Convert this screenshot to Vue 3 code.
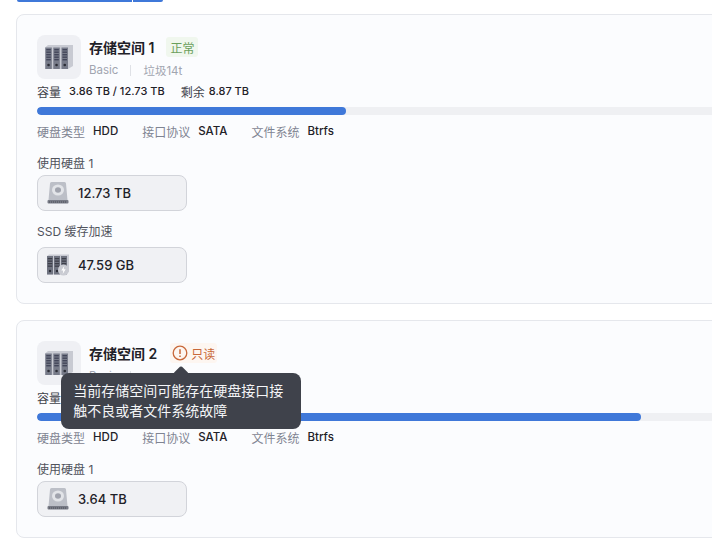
<template>
  <div class="page">
    <div class="top-btn"><span class="top-main"></span><span class="top-arrow"></span></div>

    <div v-for="pool in pools" :key="pool.name" class="card">
      <div class="head">
        <div class="pool-icon">
          <svg width="28" height="26" viewBox="0 0 28 26">
            <path d="M0 3.500l3 -2.500h25v21l-5 3h-23z" fill="#c8cad2" />
            <g v-for="x in [0.300, 8.300, 16.500]" :key="x">
              <rect :x="x" y="3.500" width="6.500" height="21.500" fill="#777b89" />
              <rect v-for="y in [5, 7.500, 10, 12.500, 15]" :key="y" :x="x + 1" :y="y" width="4.500" height="1.400" fill="#43465a" />
              <circle :cx="x + 3.250" cy="21" r="1.300" fill="#2b2d36" />
            </g>
          </svg>
        </div>
        <div class="head-text">
          <div class="title-row">
            <span class="title">{{ pool.name }}</span>
            <span v-if="pool.status === 'ok'" class="tag tag-ok">正常</span>
            <span v-else class="tag tag-warn">
              <svg width="16" height="16" viewBox="0 0 16 16" fill="none" stroke="#c8683a" stroke-width="1.300">
                <circle cx="8" cy="8" r="6.800" />
                <path d="M8 4.200v4.800M8 10.600v1.300" stroke-width="1.500" />
              </svg>
              只读
              <div class="tooltip">当前存储空间可能存在硬盘接口接触不良或者文件系统故障</div>
            </span>
          </div>
          <div class="sub-row">
            <span>Basic</span>
            <i class="sep"></i>
            <span>{{ pool.remark }}</span>
          </div>
        </div>
      </div>

      <div class="capacity">
        <span class="cap-label">容量</span>
        <b>{{ pool.used }} / {{ pool.total }}</b>
        <span class="cap-label cap-left">剩余</span>
        <b>{{ pool.free }}</b>
      </div>

      <div class="track">
        <div class="fill" :style="{ width: pool.percent + 'px' }"></div>
      </div>

      <div class="specs">
        <span class="spec"><em>硬盘类型</em><b>HDD</b></span>
        <span class="spec"><em>接口协议</em><b>SATA</b></span>
        <span class="spec"><em>文件系统</em><b>Btrfs</b></span>
      </div>

      <div class="disk-label">使用硬盘 1</div>
      <div class="chip">
        <svg width="22" height="22" viewBox="0 0 22 22">
          <path d="M3 1.500a1.500 1.500 0 0 1 1.500 -1.500h13a1.500 1.500 0 0 1 1.500 1.500l1.500 16.500h-19z" fill="#bcbfc7" />
          <ellipse cx="11" cy="8" rx="6" ry="5.600" fill="#e2e4e8" />
          <ellipse cx="11" cy="8" rx="3" ry="2.700" fill="#a0a3ad" />
          <rect x="0.500" y="18" width="21" height="3.500" rx="1" fill="#777a85" />
          <path d="M2 20h18" stroke="#4c4e57" stroke-width="1" stroke-dasharray="1 1" />
        </svg>
        <span>{{ pool.disk }}</span>
      </div>

      <template v-if="pool.ssd">
        <div class="disk-label ssd-label">SSD 缓存加速</div>
        <div class="chip">
          <svg width="22" height="22" viewBox="0 0 22 22">
            <path d="M0 2l2 -1.500h20v17l-4 3h-18z" fill="#c8cad2" />
            <g v-for="x in [0, 7, 14]" :key="x">
              <rect :x="x" y="2" width="6" height="18.500" fill="#6f7380" />
              <rect v-for="y in [4, 6.500, 9, 11.500]" :key="y" :x="x + 0.800" :y="y" width="4.400" height="1.300" fill="#3d3f49" />
              <circle :cx="x + 3" cy="17" r="1.200" fill="#2b2d36" />
            </g>
            <circle cx="16.500" cy="16" r="5.500" fill="#c9cbd2" />
            <path d="M17.300 12l-3 4.500h2l-.6 3.500 3 -4.700h-2z" fill="#fff" />
          </svg>
          <span>{{ pool.ssd }}</span>
        </div>
      </template>
    </div>
  </div>
</template>

<script setup>
const pools = [
  {
    name: "存储空间 1",
    status: "ok",
    remark: "垃圾14t",
    used: "3.86 TB",
    total: "12.73 TB",
    free: "8.87 TB",
    percent: 309,
    disk: "12.73 TB",
    ssd: "47.59 GB"
  },
  {
    name: "存储空间 2",
    status: "readonly",
    remark: "",
    used: "3.12 TB",
    total: "3.64 TB",
    free: "0.52 TB",
    percent: 604,
    disk: "3.64 TB"
  }
];
</script>

<style>
html,
body {
  overflow: hidden;
  background: #fff;
}
</style>

<style scoped>
.page {
  width: 712px;
  height: 560px;
  overflow: hidden;
  padding-left: 16px;
  box-sizing: border-box;
  font-family: Inter, "Noto Sans CJK SC", sans-serif;
  font-size: 12px;
  color: #1f2128;
}
.top-btn {
  display: flex;
  gap: 1px;
  height: 2px;
  margin-left: 1px;
  margin-bottom: 12px;
}
.top-main {
  width: 115px;
  background: #3f78d9;
  border-radius: 0 0 0 5px;
}
.top-arrow {
  width: 30px;
  background: #3f78d9;
  border-radius: 0 0 5px 0;
}
.card {
  width: 1060px;
  box-sizing: border-box;
  padding: 20px;
  margin-bottom: 16px;
  background: #fbfcfe;
  border: 1px solid #e5e7ec;
  border-radius: 8px;
}
.head {
  display: flex;
  gap: 8px;
  height: 44px;
}
.pool-icon {
  width: 44px;
  height: 44px;
  border-radius: 8px;
  background: #eff0f4;
  display: flex;
  align-items: center;
  justify-content: center;
}
.title-row {
  display: flex;
  align-items: center;
  gap: 12px;
  height: 24px;
}
.title {
  font-size: 14px;
  font-weight: 600;
  color: #1f2128;
}
.tag {
  position: relative;
  display: flex;
  align-items: center;
  height: 20px;
  padding: 0 4px;
  border-radius: 3px;
  font-size: 12px;
}
.tag-ok {
  background: #f0f7ee;
  color: #6a9f5c;
}
.tag-warn {
  gap: 3px;
  padding: 0 2px;
  margin-left: 1px;
  background: #fdf6f1;
  color: #c8683a;
}
.tooltip {
  position: absolute;
  left: -109px;
  top: 30px;
  width: 240px;
  box-sizing: border-box;
  padding: 8px 12px;
  background: #3f424b;
  border-radius: 8px;
  color: #f4f5f7;
  font-size: 14px;
  line-height: 20px;
  z-index: 2;
}
.tooltip::before {
  content: "";
  position: absolute;
  left: 114px;
  top: -5px;
  width: 12px;
  height: 12px;
  background: #3f424b;
  border-radius: 3px;
  transform: rotate(45deg);
}
.sub-row {
  display: flex;
  align-items: center;
  height: 20px;
  margin-top: 1px;
  color: #a1a5b0;
  font-size: 11.500px;
}
.sep {
  width: 1px;
  height: 11px;
  margin: 0 12px;
  background: #dfe1e6;
}
.capacity {
  display: flex;
  align-items: center;
  height: 18px;
  margin-top: 3px;
  font-size: 11px;
}
.cap-label {
  font-size: 12px;
  color: #3e414a;
  margin-right: 8px;
}
.cap-left {
  margin-left: 16px;
  margin-right: 4px;
}
.capacity b {
  font-weight: 500;
}
.track {
  height: 8px;
  margin-top: 7px;
  background: #eff0f3;
  border-radius: 4px;
  overflow: hidden;
}
.fill {
  height: 100%;
  background: #3f78d9;
  border-radius: 4px;
}
.specs {
  display: flex;
  gap: 24px;
  height: 20px;
  margin-top: 6px;
  align-items: center;
}
.spec {
  display: flex;
  gap: 8px;
  align-items: center;
}
.spec em {
  font-style: normal;
  color: #7f8492;
}
.spec b {
  font-weight: 500;
  font-size: 11.500px;
}
.disk-label {
  height: 18px;
  line-height: 18px;
  margin-top: 14px;
  color: #50535c;
  font-size: 12px;
}
.ssd-label {
  margin-top: 12px;
  margin-bottom: 6px;
}
.chip {
  display: flex;
  align-items: center;
  gap: 9px;
  width: 150px;
  height: 36px;
  box-sizing: border-box;
  margin-top: 2px;
  padding-left: 9px;
  background: #f0f1f4;
  border: 1px solid #d2d4da;
  border-radius: 8px;
  font-size: 13px;
  font-weight: 500;
}
.ssd-label + .chip {
  margin-top: 0;
}
</style>
